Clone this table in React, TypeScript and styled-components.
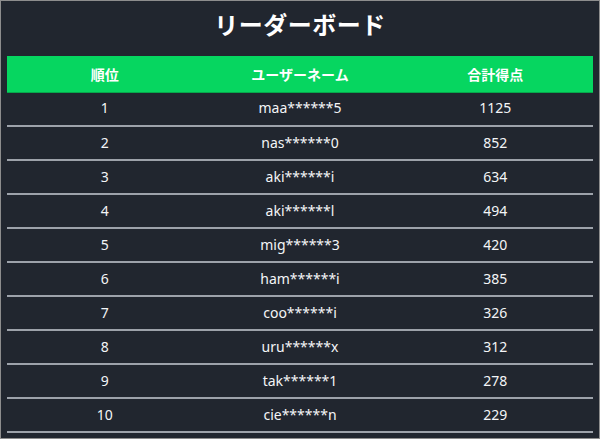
import styled, { createGlobalStyle } from 'styled-components';

const GlobalStyle = createGlobalStyle`
	* {
		box-sizing: border-box;
	}

	body {
		margin: 0;
		background: #21262f;
		font-family: 'Noto Sans', 'Noto Sans CJK JP', sans-serif;
	}
`;

const Page = styled.div`
	height: 439px;
	padding: 0 6px;
	border: solid 1px #8d8d8d;
	background: #21262f;
	color: #ffffff;
`;

const Title = styled.h1`
	margin: 0;
	padding-top: 4px;
	height: 55px;

	font-family: 'Noto Sans CJK JP', sans-serif;
	font-size: 24px;
	font-weight: 700;
	line-height: 38px;
	text-align: center;
	letter-spacing: 0.5px;
`;

const Table = styled.table`
	width: 100%;
	border-collapse: collapse;
	table-layout: fixed;
`;

const HeadRow = styled.tr`
	background: #06d660;
	border-bottom: solid 1px #07a84c;
`;

const HeadCell = styled.th`
	height: 36px;
	padding: 0;

	font-family: 'Noto Sans CJK JP', sans-serif;
	font-size: 14px;
	font-weight: 700;
	text-align: center;
`;

const Row = styled.tr`
	border-bottom: solid 2px #9da2aa;
`;

const Cell = styled.td`
	height: 34px;
	padding: 0 0 2px;

	font-family: 'Noto Sans', sans-serif;
	font-size: 14px;
	text-align: center;
	color: #f4f5f7;
`;

const players = [
	{ rank: 1, name: 'maa******5', score: 1125 },
	{ rank: 2, name: 'nas******0', score: 852 },
	{ rank: 3, name: 'aki******i', score: 634 },
	{ rank: 4, name: 'aki******l', score: 494 },
	{ rank: 5, name: 'mig******3', score: 420 },
	{ rank: 6, name: 'ham******i', score: 385 },
	{ rank: 7, name: 'coo******i', score: 326 },
	{ rank: 8, name: 'uru******x', score: 312 },
	{ rank: 9, name: 'tak******1', score: 278 },
	{ rank: 10, name: 'cie******n', score: 229 }
];

export default function App() {
	return (
		<>
			<GlobalStyle />
			<Page>
				<Title>リーダーボード</Title>
				<Table>
					<thead>
						<HeadRow>
							<HeadCell>順位</HeadCell>
							<HeadCell>ユーザーネーム</HeadCell>
							<HeadCell>合計得点</HeadCell>
						</HeadRow>
					</thead>
					<tbody>
						{players.map((player) => (
							<Row key={player.rank}>
								<Cell>{player.rank}</Cell>
								<Cell>{player.name}</Cell>
								<Cell>{player.score}</Cell>
							</Row>
						))}
					</tbody>
				</Table>
			</Page>
		</>
	);
}
